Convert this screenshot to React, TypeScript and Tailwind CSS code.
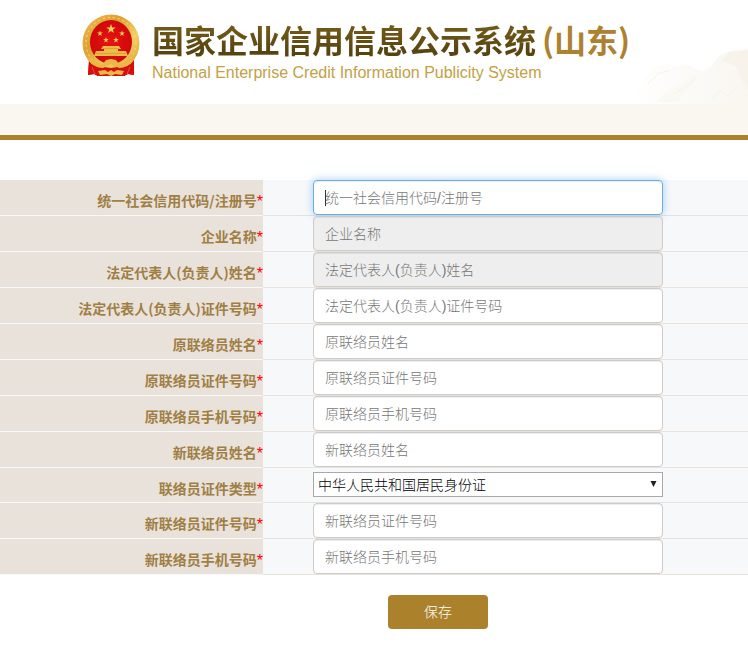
type Field = {
  id: string;
  label: string;
  kind?: "active" | "disabled" | "select";
};

const fields: Field[] = [
  { id: "creditCode", label: "统一社会信用代码/注册号", kind: "active" },
  { id: "companyName", label: "企业名称", kind: "disabled" },
  { id: "legalName", label: "法定代表人(负责人)姓名", kind: "disabled" },
  { id: "legalId", label: "法定代表人(负责人)证件号码" },
  { id: "oldName", label: "原联络员姓名" },
  { id: "oldId", label: "原联络员证件号码" },
  { id: "oldPhone", label: "原联络员手机号码" },
  { id: "newName", label: "新联络员姓名" },
  { id: "idType", label: "联络员证件类型", kind: "select" },
  { id: "newId", label: "新联络员证件号码" },
  { id: "newPhone", label: "新联络员手机号码" },
];

const STAR = "M0,-5 L1.2,-1.6 L4.8,-1.5 L1.9,0.6 L2.9,4 L0,2 L-2.9,4 L-1.9,0.6 L-4.8,-1.5 L-1.2,-1.6 Z";

function Emblem() {
  return (
    <svg className="h-16 w-[58px] shrink-0" viewBox="0 0 58 64" aria-hidden="true">
      <defs>
        <linearGradient id="gold" x1="0" y1="0" x2="1" y2="1">
          <stop offset="0" stopColor="#f0c050" />
          <stop offset="0.35" stopColor="#dda030" />
          <stop offset="0.65" stopColor="#f3cf62" />
          <stop offset="1" stopColor="#d8982a" />
        </linearGradient>
        <radialGradient id="red">
          <stop offset="0" stopColor="#e81312" />
          <stop offset="1" stopColor="#d0080a" />
        </radialGradient>
      </defs>
      <path d="M7 44 H52 L52 61 L46 60 L42 62 H16 L12 60 L6 61 Z" fill="#d80d0e" />
      <ellipse cx="29" cy="29" rx="28.5" ry="28.5" fill="url(#gold)" />
      <ellipse cx="29" cy="29" rx="25" ry="25.5" fill="none" stroke="#f7dc83" strokeWidth="1" strokeDasharray="2 3" />
      <path d="M7 49 L15 52 L29 54 L43 52 L51 49 L52 61 L46 60 L42 62 H16 L12 60 L6 61 Z" fill="#d80d0e" />
      <ellipse cx="29" cy="28" rx="21" ry="22" fill="url(#red)" />
      <g fill="#f2ce55">
        <path d={STAR} transform="translate(29 15)" />
        <path d={STAR} transform="translate(18 19.500) scale(.6)" />
        <path d={STAR} transform="translate(40 19.500) scale(.6)" />
        <path d={STAR} transform="translate(24 26) scale(.6)" />
        <path d={STAR} transform="translate(34 26) scale(.6)" />
      </g>
      <path d="M21 32 H37 L39 35 H36 V37 H44 L46 42 H12 L14 37 H22 V35 H19 Z" fill="#ecbd49" />
      <path d="M14 39.500 H44 M21 34.500 H37" stroke="#d9952c" strokeWidth=".7" />
      <path
        d="M9 43 Q14 50 21 50 L24 46 L29 45 L34 46 L37 50 Q44 50 49 43 L52 46 Q46 54 37 54 L33 52 L29 50 L25 52 L21 54 Q12 54 6 46 Z"
        fill="#eab845"
      />
      <path d="M16 57 L23 56 L26 58 L29 56 L32 58 L35 56 L42 57 L40 61 L33 60 L29 62 L25 60 L18 61 Z" fill="#eab845" />
      <path d="M10 53 L13 60 M48 53 L45 60" stroke="#f04a3a" strokeWidth="1" />
    </svg>
  );
}

function Mountains() {
  return (
    <svg className="absolute right-0 bottom-0 h-[60px] w-[120px]" viewBox="0 0 120 60" aria-hidden="true">
      <defs>
        <linearGradient id="mist" x1="0" x2="1" y1="0" y2="0">
          <stop offset="0" stopColor="#fff" />
          <stop offset="1" stopColor="#f9f6f0" />
        </linearGradient>
      </defs>
      <path d="M0 60 L12 40 L20 28 L30 22 L40 20 L48 23 L56 20 L66 24 L74 27 L84 22 L91 12 L102 7 L120 5 V60 Z" fill="url(#mist)" />
      <path d="M94 16 L102 8 L120 6 V46 L114 36 L108 22 Z" fill="#f7f2ea" />
      <path d="M28 58 L40 46 L52 42 L62 32 L72 28 L66 40 L56 48 L50 58 Z" fill="#fbf9f4" />
      <path d="M20 40 L30 30 L42 26 M46 50 L56 44 L68 34 M84 56 L92 46 L100 52 L110 42" stroke="#f7f3ea" fill="none" />
    </svg>
  );
}

const inputBase =
  "block h-[35px] w-full rounded border py-0.5 pl-[11px] pr-3 text-sm font-light text-[#333] outline-none placeholder:text-[#777] placeholder:opacity-100";
const inputStyles = {
  normal: "border-[#ccc] bg-white shadow-[inset_0_1px_1px_rgba(0,0,0,0.075)]",
  disabled: "border-[#ccc] bg-[#eee] shadow-[inset_0_1px_1px_rgba(0,0,0,0.075)]",
  active: "border-[#66afe9] bg-white shadow-[inset_0_1px_1px_rgba(0,0,0,0.075),0_0_8px_rgba(102,175,233,0.6)]",
};

function Control({ field }: { field: Field }) {
  if (field.kind === "select") {
    return (
      <div className="relative">
        <select
          id={field.id}
          className="block h-[25px] w-full appearance-none rounded-none border border-[#a9a9a9] bg-white pl-1 text-sm leading-5 font-light text-black outline-none"
        >
          <option>中华人民共和国居民身份证</option>
        </select>
        <svg className="pointer-events-none absolute top-2 right-1.5 h-2 w-[7px]" viewBox="0 0 7 8" aria-hidden="true">
          <path d="M0.500 1 H6.500 L3.500 7 Z" fill="#222" />
        </svg>
      </div>
    );
  }
  const style = inputStyles[field.kind ?? "normal"];
  return (
    <div className="relative">
      <input
        id={field.id}
        type="text"
        placeholder={field.label}
        disabled={field.kind === "disabled"}
        className={`${inputBase} ${style}`}
      />
      {field.kind === "active" && <span className="absolute top-2.5 left-3 h-4 w-px bg-[#333]" />}
    </div>
  );
}

export default function App() {
  return (
    <div className="min-h-screen bg-white font-['Liberation_Sans','Noto_Sans_CJK_SC',sans-serif]">
      <header>
        <div className="relative flex h-[104px] items-start gap-3 pt-[14px] pl-[82px]">
          <Mountains />
          <Emblem />
          <div className="relative pt-1 whitespace-nowrap">
            <h1 className="flex gap-1.5 font-['Noto_Sans_CJK_SC',sans-serif] text-[32px] leading-[42px] font-bold">
              <span className="bg-linear-to-b from-[#6f5718] from-30% to-[#574410] to-80% bg-clip-text text-transparent">
                国家企业信用信息公示系统
              </span>
              <span className="text-[#ad812f]">(山东)</span>
            </h1>
            <p className="text-base leading-[26px] text-[#c5a044]">
              National Enterprise Credit Information Publicity System
            </p>
          </div>
        </div>
        <div className="h-9 border-b-[5px] border-[#ab822b] bg-[#faf7f0]" />
      </header>

      <form className="pt-10" onSubmit={(e) => e.preventDefault()}>
        {fields.map((field) => (
          <div key={field.id} className="flex">
            <label
              htmlFor={field.id}
              className="flex w-[263px] shrink-0 justify-end border-b border-[#f7f8fa] bg-[#e9e2db] pt-2.5 font-['Noto_Sans_CJK_SC',sans-serif] text-sm leading-5 font-bold text-[#a07f45]"
            >
              {field.label}
              <span className="font-['Liberation_Sans',sans-serif] text-base leading-6 font-normal text-[#f00]">*</span>
            </label>
            <div
              className={`flex-1 border-b border-[#e9e2db] bg-[#f7f8fa] pl-[50px] ${field.kind === "select" ? "pt-1 pb-[5px]" : ""}`}
            >
              <div className="w-full max-w-[350px]">
                <Control field={field} />
              </div>
            </div>
          </div>
        ))}
        <div className="flex justify-center pt-5 pl-32">
          <button type="submit" className="h-[34px] w-[100px] rounded bg-[#ab822b] text-sm font-light text-white">
            保存
          </button>
        </div>
      </form>
    </div>
  );
}
